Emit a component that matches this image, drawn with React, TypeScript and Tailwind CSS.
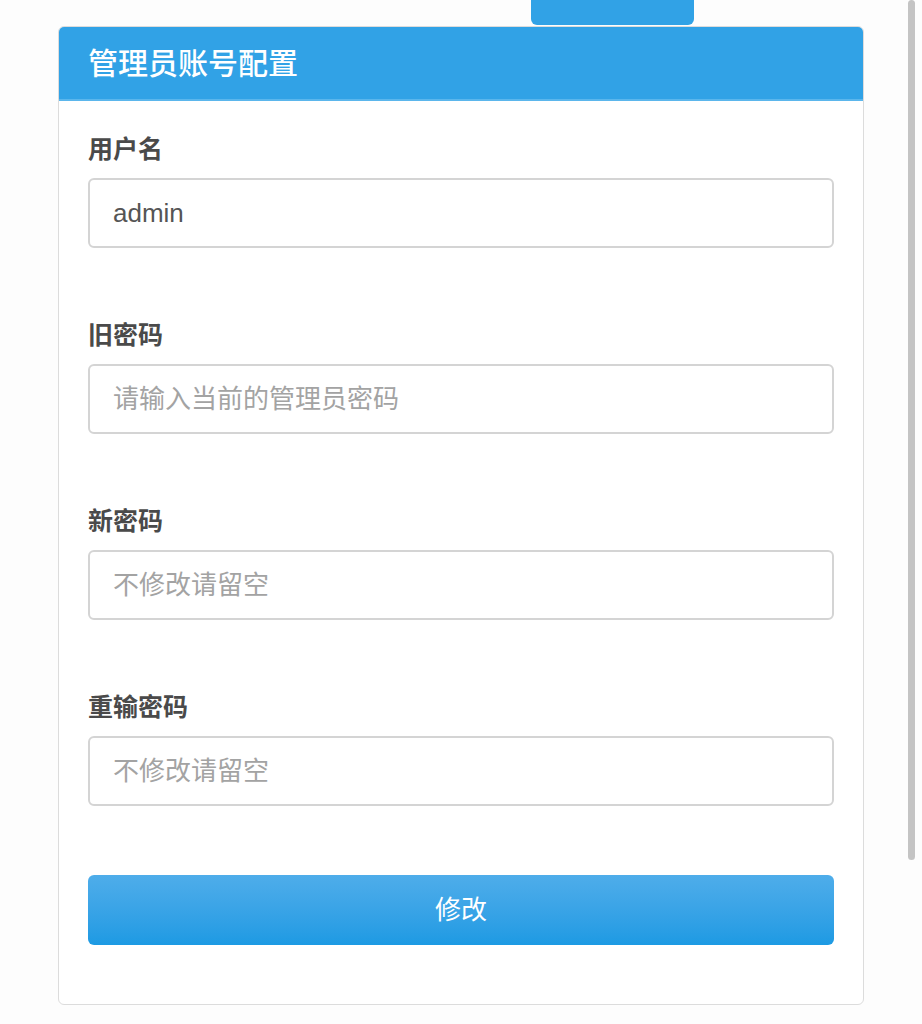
const fields = [
    { label: '用户名', value: 'admin', placeholder: '' },
    { label: '旧密码', value: '', placeholder: '请输入当前的管理员密码' },
    { label: '新密码', value: '', placeholder: '不修改请留空' },
    { label: '重输密码', value: '', placeholder: '不修改请留空' },
];

const font = "font-['Liberation_Sans','Noto_Sans_CJK_SC',sans-serif]";

const App = () => {
    return (
        <div className={`relative min-h-screen w-full bg-[#fdfdfd] ${font}`}>
            <div className="ml-[531px] h-[25px] w-[163px] rounded-b-md bg-[#31a2e6]" />
            <div className="ml-[58px] mt-[1px] w-[806px] overflow-hidden rounded-md border border-[#dcdcdc] bg-white">
                <div className="flex h-[74px] items-center border-b-2 border-[#5bb6ec] bg-[#31a2e6] px-[29px] pt-[2px]">
                    <h1 className="text-[30px] font-medium leading-none text-white">管理员账号配置</h1>
                </div>
                <div className="flex flex-col px-[29px] pb-[59px] pt-[30px]">
                    {fields.map((f, i) => (
                        <div key={f.label} className={i === 0 ? 'flex flex-col' : 'mt-[69px] flex flex-col'}>
                            <label className="mb-[11px] text-[25px] font-bold leading-[36px] text-[#4a4a4a]">{f.label}</label>
                            <input
                                type={i === 0 ? 'text' : 'password'}
                                defaultValue={f.value}
                                placeholder={f.placeholder}
                                className="h-[70px] w-full rounded-md border-2 border-[#d4d4d4] bg-white px-[23px] text-[26px] text-[#555] outline-none placeholder:text-[#a3a3a3]"
                            />
                        </div>
                    ))}
                    <button className="mt-[69px] h-[70px] w-full rounded-md bg-gradient-to-b from-[#4eadea] to-[#1c9ae3] text-[26px] text-white">
                        修改
                    </button>
                </div>
            </div>
            <div className="absolute right-[7px] top-0 h-[860px] w-[7px] rounded-full bg-[#c4c4c4]" />
        </div>
    );
};

export default App;
